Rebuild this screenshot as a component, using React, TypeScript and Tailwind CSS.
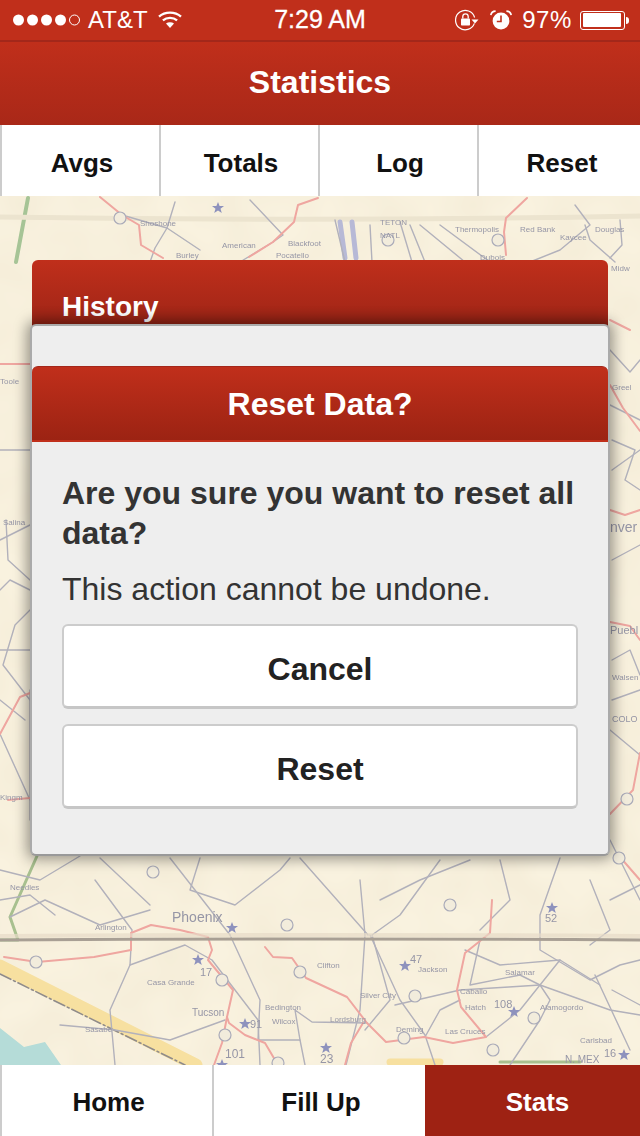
import React from 'react';

const FONT = { fontFamily: '"Liberation Sans", Arial, sans-serif' };

const GRAY_ROADS = [
  'M175 202L167 228L155 248L150 262', 'M122 215L167 228L200 250', 'M250 200L283 235L273 242L240 262', 'M335 220L345 262', 'M370 225L372 262', 'M420 225L465 262', 'M440 225L490 262', 'M400 222L412 262', 'M410 225L425 262',
  'M575 205L590 225L560 250L530 262', 'M585 225L590 240L615 262', 'M620 220L622 245L610 258', 'M0 450L30 450', 'M0 540L30 525', 'M6 520L8 560L30 580', 'M0 590L10 580L30 590', 'M30 610L15 625L3 665L30 700', 'M30 690L30 820',
  'M0 734L30 800', 'M0 700L25 720', 'M0 650L30 650', 'M610 350L630 372L640 360', 'M610 405L640 420', 'M612 470L640 450', 'M612 560L640 545', 'M612 700L640 690', 'M610 730L640 755', 'M610 840L640 900', 'M610 900L640 885', 'M612 990L640 1005', 'M612 440L635 450L625 480L640 490', 'M612 660L630 650L640 675',
  'M0 870L40 880L80 856', 'M10 917L45 900L100 925L150 910', 'M95 880L132 930L130 965L110 1010L115 1065', 'M130 965L185 945L212 960L258 1020L260 1065', 'M60 1025L115 1030L170 1040L225 1020', 'M0 900L30 895L55 915', 'M100 858L150 905', 'M200 858L190 890L235 905L280 870L290 858',
  'M170 858L230 935', 'M230 935L260 1000L258 1040L300 1040L305 1065', 'M300 1040L295 1010L312 1022L367 1023', 'M360 880L365 935L360 1010L346 1065', 'M300 858L368 935', 'M440 860L400 915L372 935L390 1000L365 1030', 'M370 935L400 1000L425 1035L435 1065', 'M380 900L420 880L470 860',
  'M395 1005L460 990L540 985', 'M540 985L610 1010L640 1015', 'M480 940L470 985L520 975L540 985L550 1000L540 1020L510 1065', 'M560 960L540 985', 'M486 1037L520 1010L540 985', 'M560 858L540 915L540 950L590 980L620 965L640 960', 'M595 975L630 1050', 'M425 1037L440 1010L460 1000', 'M465 950L500 965L560 960L600 985', 'M500 860L510 900L480 930', 'M590 880L610 930L590 945',
];

const RED_ROADS = [
  'M100 197L122 215L139 225L141 245L163 258', 'M318 198L298 205L294 222L273 242L249 257', 'M527 198L506 218L504 232L506 255', 'M610 385L623 408L640 431', 'M610 320L630 330', 'M0 364L30 364', 'M0 734L20 697L30 693', 'M8 800L30 798', 'M610 622L630 626L640 640', 'M610 814L633 790L640 753', 'M610 510L625 515L640 510',
  'M620 857L640 880', 'M4 957L37 962L94 957L131 950L131 933L151 925L180 930L208 937L212 950L208 960L233 990L227 1017L229 1023L245 1035L265 1043L278 1065', 'M227 1017L222 1043L214 1065',
  'M265 947L273 957L292 958L306 978L347 997L367 1023L386 1042L424 1037L453 1043L486 1037L461 1007L457 990L465 953L490 933L492 900', 'M363 1023L351 1043L345 1065',
];

const LABELS: [number, number, string, number?][] = [
  [140, 226, 'Shoshone'], [176, 258, 'Burley'], [222, 248, 'American'], [288, 246, 'Blackfoot'], [276, 258, 'Pocatello'], [455, 232, 'Thermopolis'], [520, 232, 'Red Bank'], [560, 240, 'Kaycee'], [595, 232, 'Douglas'], [480, 260, 'Dubois'], [380, 225, 'TETON'], [380, 238, 'NATL'],
  [611, 271, 'Midw'], [612, 390, 'Greel'], [610, 532, 'nver', 14], [610, 634, 'Puebl', 11], [612, 680, 'Walsen'], [612, 722, 'COLO', 9], [0, 384, 'Toole'], [3, 525, 'Salina'], [0, 800, 'Kingm'], [10, 890, 'Needles'], [172, 922, 'Phoenix', 14], [95, 930, 'Arlington'], [147, 985, 'Casa Grande'],
  [192, 1016, 'Tucson', 10], [85, 1032, 'Sasabe'], [272, 1024, 'Wilcox'], [265, 1010, 'Bedington'], [317, 968, 'Clifton'], [360, 998, 'Silver City'], [330, 1022, 'Lordsburg'], [396, 1032, 'Deming'], [445, 1034, 'Las Cruces'], [465, 1010, 'Hatch'], [460, 994, 'Caballo'], [418, 972, 'Jackson'], [505, 975, 'Salamar'], [540, 1010, 'Alamogordo'],
  [494, 1008, '108', 11], [580, 1043, 'Carlsbad'], [565, 1063, 'N. MEX', 10], [225, 1058, '101', 12], [320, 1063, '23', 12], [250, 1028, '91', 11], [200, 976, '17', 11], [410, 963, '47', 11], [545, 922, '52', 11], [604, 1057, '16', 11],
];

const STARS: [number, number][] = [[232, 928], [198, 960], [245, 1024], [326, 1048], [405, 966], [514, 1012], [552, 908], [624, 1055], [222, 1065], [218, 208]];
const SHIELDS: [number, number][] = [[120, 218], [498, 240], [36, 962], [153, 872], [222, 980], [300, 972], [415, 996], [404, 1038], [534, 1018], [493, 1050], [225, 1035], [278, 1063], [627, 799], [619, 858], [450, 905], [287, 925], [388, 240]];

const STAR_PATH = 'M0 -6L1.6 -1.9L6 -1.9L2.5 0.8L3.8 5L0 2.5L-3.8 5L-2.5 0.8L-6 -1.9L-1.6 -1.9Z';

function MapBackground() {
  return (
    <svg className="absolute inset-0 w-full h-full" viewBox="0 196 640 869" preserveAspectRatio="none" aria-hidden="true">
      <defs>
        <filter id="soft"><feGaussianBlur stdDeviation="0.7" /></filter>
        <filter id="paper">
          <feTurbulence type="fractalNoise" baseFrequency="0.02" numOctaves="2" seed="4" />
          <feColorMatrix values="0 0 0 0 0.75  0 0 0 0 0.66  0 0 0 0 0.48  0 0 0 0.3 -0.08" />
        </filter>
      </defs>
      <rect x="0" y="196" width="640" height="869" fill="#f9f2df" />
      <rect x="0" y="196" width="640" height="869" filter="url(#paper)" />
      <g filter="url(#soft)" fill="none" strokeLinecap="round" strokeLinejoin="round">
        <path d="M0 1028L24 1047L45 1042L61 1065L0 1065Z" fill="#b5dcd8" />
        <path d="M0 966L196 1065" stroke="#f7e0a0" strokeWidth="13" />
        <path d="M390 1062L440 1062" stroke="#f7e0a0" strokeWidth="7" />
        <path d="M0 974L185 1065" stroke="#8f8b8a" strokeWidth="1.6" strokeDasharray="12 3 2 3" />
        <path d="M28 198L16 262" stroke="#a6c496" strokeWidth="4" />
        <path d="M10 917L37 856M0 940L18 940L10 917" stroke="#a8c08f" strokeWidth="3" />
        <path d="M500 1062L580 1062" stroke="#a8c08f" strokeWidth="3" />
        <path d="M0 217Q320 222 640 216" stroke="#ece4cf" strokeWidth="5" />
        <path d="M340 222L345 258M352 222L356 258" stroke="#b7b9d6" strokeWidth="5" />
        {GRAY_ROADS.map((d, i) => <path key={i} d={d} stroke="#b2b1bb" strokeWidth="1.4" />)}
        {RED_ROADS.map((d, i) => <path key={i} d={d} stroke="#efa6a0" strokeWidth="2" />)}
        {SHIELDS.map(([x, y], i) => <circle key={i} cx={x} cy={y} r="6" stroke="#aaabb9" strokeWidth="1.2" fill="#f2ecdc" />)}
        {STARS.map(([x, y], i) => <path key={i} d={STAR_PATH} transform={`translate(${x} ${y})`} fill="#8e92bd" />)}
        <path d="M0 940Q320 938 640 940" stroke="#a89f94" strokeWidth="3" />
        <path d="M0 936Q320 934 640 936" stroke="#e7dcc7" strokeWidth="4" opacity="0.7" />
        {LABELS.map(([x, y, t, s], i) => (
          <text key={i} x={x} y={y} fill="#9696a6" stroke="none" fontSize={s ?? 8} fontFamily='"Liberation Sans", sans-serif'>{t}</text>
        ))}
      </g>
    </svg>
  );
}

function SignalDots() {
  return (
    <svg width="68" height="14" viewBox="0 0 68 14" className="shrink-0" aria-hidden="true">
      {[5.5, 19.5, 33.5, 47.5].map((cx) => <circle key={cx} cx={cx} cy="7" r="5.5" fill="#fff" />)}
      <circle cx="61.5" cy="7" r="5" fill="none" stroke="#fff" strokeWidth="1" />
    </svg>
  );
}

function Wifi() {
  return (
    <svg width="24" height="19" viewBox="0 0 24 19" aria-hidden="true">
      <path d="M1 6.6C7 1.2 17 1.2 23 6.6" fill="none" stroke="#fff" strokeWidth="2.3" />
      <path d="M4.9 10.4C8.9 7 15.1 7 19.1 10.4" fill="none" stroke="#fff" strokeWidth="2.3" />
      <path d="M12 18L8 13.6C10.3 11.9 13.7 11.9 16 13.6Z" fill="#fff" />
    </svg>
  );
}

function RotationLock() {
  return (
    <svg width="24" height="22" viewBox="0 0 24 22" aria-hidden="true">
      <path d="M19.6 8.5A9.7 9.7 0 1 0 19.4 14.4" fill="none" stroke="#fff" strokeWidth="1.2" />
      <path d="M16.5 10.5L23.5 10.5L20 14.5Z" fill="#fff" />
      <rect x="6" y="9.5" width="9" height="7" rx="0.8" fill="#fff" />
      <path d="M7.8 9.5V7.6a2.7 2.7 0 0 1 5.4 0V9.5" fill="none" stroke="#fff" strokeWidth="1.3" />
    </svg>
  );
}

function Alarm() {
  return (
    <svg width="22" height="20" viewBox="0 0 22 20" aria-hidden="true">
      <circle cx="11" cy="11" r="8.4" fill="#fff" />
      <path d="M11 5.5V11.5H6.8" fill="none" stroke="#c02f1b" strokeWidth="1.6" />
      <path d="M0.8 5.2C1.2 2.6 3 1.2 5.6 1.1M21.2 5.2C20.8 2.6 19 1.2 16.4 1.1" fill="none" stroke="#fff" strokeWidth="1.6" />
    </svg>
  );
}

function Battery() {
  return (
    <div className="flex items-center">
      <div className="w-[45px] h-[19px] rounded-[3px] border border-white p-[1.5px]">
        <div className="h-full w-[97%] bg-white rounded-[1px]" />
      </div>
      <div className="w-[3px] h-[7px] bg-white rounded-r-sm ml-[1px]" />
    </div>
  );
}

function StatusBar() {
  return (
    <div className="relative h-[42px] bg-[#c02f1b] border-b-2 border-[#a3271a] text-white flex items-center pl-[13px] pr-[11px] text-[24px]">
      <SignalDots />
      <span className="ml-[7px]">AT&amp;T</span>
      <span className="ml-[10px] mt-[-2px]"><Wifi /></span>
      <span className="absolute left-0 right-0 text-center text-[25px] [-webkit-text-stroke:0.3px_white] pointer-events-none">7:29 AM</span>
      <div className="ml-auto flex items-center">
        <RotationLock />
        <span className="ml-[11px]"><Alarm /></span>
        <span className="ml-[10px] mr-[8px] tracking-[0.6px]">97%</span>
        <Battery />
      </div>
    </div>
  );
}

const TABS = [
  { label: 'Avgs', width: 'w-[159px] pl-[3px]' },
  { label: 'Totals', width: 'w-[159px] pl-[3px]' },
  { label: 'Log', width: 'w-[159px] pl-[3px]' },
  { label: 'Reset', width: 'flex-1 pl-[5px]' },
];

const FOOTER = [
  { label: 'Home', width: 'w-[212px] pl-[3px]', active: false },
  { label: 'Fill Up', width: 'w-[213px] pl-[3px]', active: false },
  { label: 'Stats', width: 'flex-1 pl-[10px]', active: true },
];

function DialogButton({ label }: { label: string }) {
  return (
    <button className="h-[85px] w-full pt-[6px] rounded-md bg-white border-2 border-[#ccc] border-b-[3px] border-b-[#c6c6c6] text-[32px] font-bold text-[#222]">
      {label}
    </button>
  );
}

export default function App() {
  return (
    <div className="w-[640px] h-[1136px] flex flex-col overflow-hidden bg-white" style={FONT}>
      <StatusBar />
      <div className="h-[83px] pb-[4px] bg-gradient-to-b from-[#c02f1b] to-[#a92818] flex items-center justify-center text-white text-[32px] font-bold">
        Statistics
      </div>
      <div className="h-[71px] flex">
        {TABS.map((t) => (
          <div key={t.label} className={'flex items-center justify-center pt-[5px] bg-white border-l-2 border-[#ccc] text-[26px] font-bold text-[#111] ' + t.width}>
            {t.label}
          </div>
        ))}
      </div>

      <main className="relative flex-1 px-8 pt-16 overflow-hidden">
        <MapBackground />
        <section className="relative h-[90px] rounded-t-md bg-gradient-to-b from-[#c02f1b] via-[#a92818] to-[#7a1c10] px-[30px] pt-[26px] text-white text-[28px] font-bold">
          History
        </section>

        <div className="absolute left-[30px] top-[128px] w-[580px] h-[532px] rounded-md bg-[#eee] border-2 border-[#aaa] border-b-[#999] shadow-[0_0_14px_3px_rgba(0,0,0,0.4)]">
          <div className="mt-[40px] h-[76px] rounded-t-md bg-gradient-to-b from-[#c02f1b] to-[#9c2313] border-t border-[#a3271a] border-b-2 border-b-[#c02f1b] flex items-center justify-center text-white text-[32px] font-bold">
            Reset Data?
          </div>
          <div className="px-[30px] pt-[31px]">
            <h3 className="text-[32px] leading-[40px] font-bold text-[#333]">Are you sure you want to reset all data?</h3>
            <p className="mt-[16px] text-[32px] leading-[40px] text-[#333]">This action cannot be undone.</p>
            <div className="mt-[15px] flex flex-col gap-[15px]">
              <DialogButton label="Cancel" />
              <DialogButton label="Reset" />
            </div>
          </div>
        </div>
      </main>

      <div className="h-[71px] flex">
        {FOOTER.map((t) => (
          <div
            key={t.label}
            className={
              'flex items-center justify-center pt-[4px] text-[26px] font-bold ' + t.width + ' ' +
              (t.active ? 'bg-[#9e2213] text-white' : 'bg-white text-[#111] border-l-2 border-[#ccc]')
            }
          >
            {t.label}
          </div>
        ))}
      </div>
    </div>
  );
}
